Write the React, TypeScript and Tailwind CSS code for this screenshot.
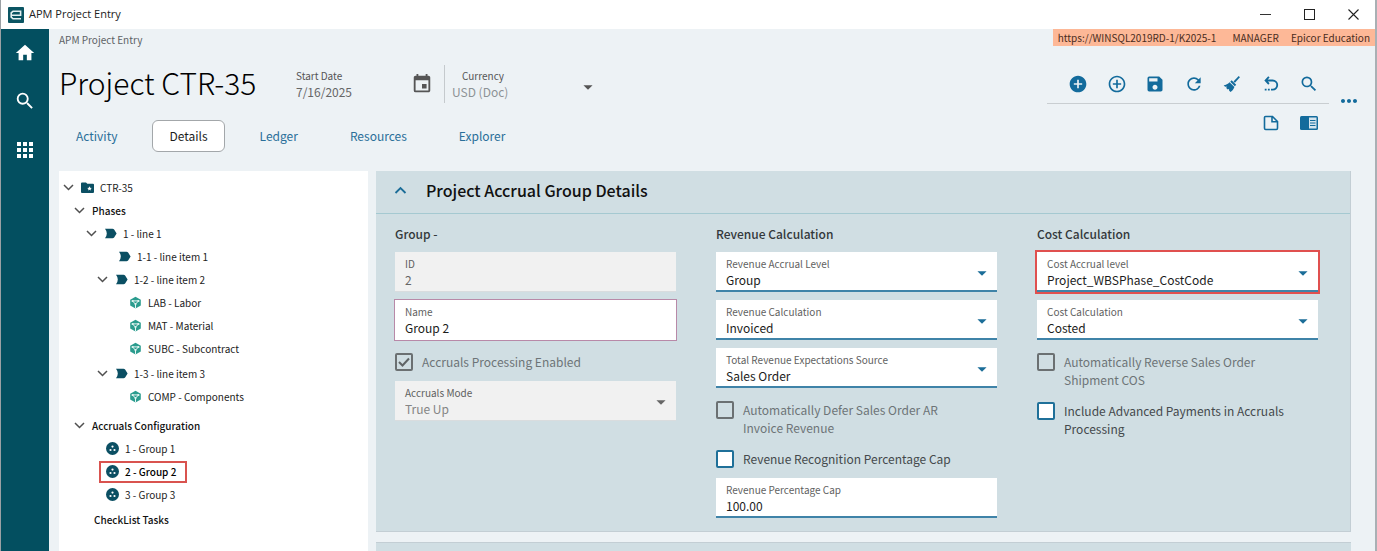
import React, { useState } from "react";
import {
  MdAddCircle,
  MdAddCircleOutline,
  MdApps,
  MdArrowDropDown,
  MdEvent,
  MdHome,
  MdMoreHoriz,
  MdRefresh,
  MdSave,
  MdSearch,
} from "react-icons/md";

type TreeIcon = "folder" | "phase" | "cost" | "group";

interface TreeNode {
  label: string;
  indent: string;
  icon?: TreeIcon;
  expandable?: boolean;
  bold?: boolean;
  selected?: boolean;
}

const projectNodes: TreeNode[] = [
  { label: "CTR-35", indent: "pl-[3px]", icon: "folder", expandable: true },
  { label: "Phases", indent: "pl-[14px]", expandable: true, bold: true },
  { label: "1 - line 1", indent: "pl-[26px]", icon: "phase", expandable: true },
  { label: "1-1 - line item 1", indent: "pl-[59px]", icon: "phase" },
  { label: "1-2 - line item 2", indent: "pl-[37px]", icon: "phase", expandable: true },
  { label: "LAB - Labor", indent: "pl-[70px]", icon: "cost" },
  { label: "MAT - Material", indent: "pl-[70px]", icon: "cost" },
  { label: "SUBC - Subcontract", indent: "pl-[70px]", icon: "cost" },
];

const lastPhaseNodes: TreeNode[] = [
  { label: "1-3 - line item 3", indent: "pl-[37px]", icon: "phase", expandable: true },
  { label: "COMP - Components", indent: "pl-[70px]", icon: "cost" },
];

const accrualNodes: TreeNode[] = [
  { label: "Accruals Configuration", indent: "pl-[14px]", expandable: true, bold: true },
  { label: "1 - Group 1", indent: "pl-[47px]", icon: "group" },
  { label: "2 - Group 2", indent: "pl-[47px]", icon: "group", selected: true },
  { label: "3 - Group 3", indent: "pl-[47px]", icon: "group" },
];

const tabs = ["Activity", "Details", "Ledger", "Resources", "Explorer"];

const AppLogo = () => (
  <svg viewBox="0 0 16 16" className="size-4" aria-hidden="true">
    <rect width="16" height="16" rx="1" fill="#0b5563" />
    <path
      d="M4 8.300h8.600V4.300H5L3.200 5.800v4.400L5 11.800h8"
      fill="none"
      stroke="#e4f0f2"
      strokeWidth="1.600"
    />
  </svg>
);

const BroomIcon = () => (
  <svg viewBox="0 0 24 24" className="size-5" aria-hidden="true">
    <path d="M20 2.500 21.500 4l-6 6.600-1.700-1.700z" fill="currentColor" />
    <path
      d="M11.600 7.600 17 13l-1.600 1.600L9.900 9.200zM9 9.800l5.900 5.700c-1 2.600-2.600 4.600-4.600 6L8.600 20l-.2-2-1.600.5-1.700-1.600.6-1.900-2 .2L2 13.500c2.700-.4 5.100-1.500 7-3.700z"
      fill="currentColor"
    />
  </svg>
);

const UndoIcon = () => (
  <svg viewBox="0 0 24 24" className="size-5" aria-hidden="true">
    <path
      d="M9.500 3.500 5.500 7.800l4 4.200M5.500 7.800h8.500a5.500 5.500 0 0 1 0 11H12"
      fill="none"
      stroke="currentColor"
      strokeWidth="2.200"
    />
    <path d="M4.500 17.700h2.200v2.200H4.500zM8.300 17.700h2.200v2.200H8.300z" fill="currentColor" />
  </svg>
);

const NoteIcon = () => (
  <svg viewBox="0 0 20 20" className="size-5" aria-hidden="true">
    <path
      d="M4.500 3.500h7l5 5v6.800a1.200 1.200 0 0 1-1.200 1.200H4.700a1.200 1.200 0 0 1-1.200-1.200V4.500a1 1 0 0 1 1-1zM11 3.500v5.300h5.500"
      fill="none"
      stroke="currentColor"
      strokeWidth="1.600"
    />
  </svg>
);

const PanelIcon = () => (
  <svg viewBox="0 0 20 20" className="size-5" aria-hidden="true">
    <rect x="1" y="3" width="18" height="14" rx="1.500" fill="currentColor" />
    <rect x="10" y="4.500" width="7.500" height="11" fill="#d5e5ee" />
    <path d="M11 7.500h5.500M11 10h5.500M11 12.500h5.500" stroke="currentColor" strokeWidth="1" />
  </svg>
);

const NodeIcon: React.FC<{ type: TreeIcon }> = ({ type }) => {
  if (type === "folder") {
    return (
      <svg viewBox="0 0 13 13" className="size-[13px] shrink-0" aria-hidden="true">
        <path
          d="M0 2.500a1 1 0 0 1 1-1h4l1.300 1.300H12a1 1 0 0 1 1 1V11a1 1 0 0 1-1 1H1a1 1 0 0 1-1-1z"
          fill="#0b4f63"
        />
        <path
          d="m8.500 5.200.7 1.500 1.600.2-1.200 1.100.3 1.600-1.400-.8-1.400.8.3-1.600L6.200 6.900l1.600-.2z"
          fill="#fff"
        />
      </svg>
    );
  }
  if (type === "phase") {
    return (
      <svg viewBox="0 0 13 13" className="size-[13px] shrink-0" aria-hidden="true">
        <path
          d="M1 1.800h7.500q1 0 1.600.8L12.600 6.500l-2.500 3.900q-.6.8-1.600.8H1q1.800-2.300 1.800-4.700T1 1.800z"
          fill="#0b4f63"
        />
      </svg>
    );
  }
  if (type === "cost") {
    return (
      <svg viewBox="0 0 13 13" className="size-[13px] shrink-0" aria-hidden="true">
        <path d="M6.500.8 11.800 3.700v5.800l-5.300 3-5.300-3V3.700z" fill="#2b9c8e" />
        <path
          d="M6.500 8v4.500M6.500 8 3.600 5.200M6.500 8l2.900-2.800M3.600 4.900h5.800"
          fill="none"
          stroke="#e6f6f3"
          strokeWidth="1"
        />
        <circle cx="3.600" cy="5" r="1.100" fill="#e6f6f3" />
        <circle cx="9.400" cy="5" r="1.100" fill="#e6f6f3" />
        <circle cx="6.500" cy="8" r="1.100" fill="#e6f6f3" />
      </svg>
    );
  }
  return (
    <svg viewBox="0 0 13 13" className="size-[13px] shrink-0" aria-hidden="true">
      <circle cx="6.500" cy="6.500" r="6.500" fill="#0b4f63" />
      <circle cx="6.500" cy="4.600" r="1.100" fill="#fff" />
      <circle cx="4.500" cy="8" r="1.100" fill="#fff" />
      <circle cx="8.500" cy="8" r="1.100" fill="#fff" />
    </svg>
  );
};

const TreeRow: React.FC<{ node: TreeNode }> = ({ node }) => (
  <li className={`flex h-[23px] items-center ${node.indent}`}>
    <button
      className={`flex items-center gap-1.5 whitespace-nowrap ${
        node.selected
          ? "-ml-[7px] h-[22px] border-2 border-[#d9534f] pl-[5px] pr-[9px] font-medium text-black"
          : node.bold
          ? "font-medium text-[#111]"
          : "text-[#222]"
      }`}
    >
      {node.expandable && (
        <svg viewBox="0 0 13 13" className="size-[13px] shrink-0" aria-hidden="true">
          <path d="m2 4 4.500 4.500L11 4" fill="none" stroke="#505050" strokeWidth="1.500" />
        </svg>
      )}
      {node.icon && <NodeIcon type={node.icon} />}
      {node.label}
    </button>
  </li>
);

interface FieldProps {
  id: string;
  label: string;
  value: string;
  disabled?: boolean;
  highlight?: string;
}

const TextField: React.FC<FieldProps> = ({ id, label, value, disabled, highlight }) => {
  const [text, setText] = useState(value);

  return (
    <div
      className={`h-10 px-[10px] pt-1 ${
        disabled
          ? "border-b border-[#d9dcde] bg-[#f1f1f1]"
          : highlight ?? "border-b-2 border-[#3f83a8] bg-white"
      }`}
    >
      <label htmlFor={id} className="block text-[10px] leading-4 text-[#5f5f5f]">
        {label}
      </label>
      <input
        id={id}
        value={text}
        disabled={disabled}
        onChange={(e) => setText(e.target.value)}
        className={`block h-4 w-full bg-transparent text-xs leading-4 outline-none ${
          disabled ? "text-[#666]" : "text-[#1c1c1c]"
        }`}
      />
    </div>
  );
};

const SelectField: React.FC<FieldProps> = ({ id, label, value, disabled, highlight }) => (
  <div
    className={`relative h-10 px-[10px] pt-1 ${
      disabled ? "border-b border-[#d9dcde] bg-[#f1f1f1]" : "border-b-2 border-[#3f83a8] bg-white"
    } ${highlight ?? ""}`}
  >
    <label htmlFor={id} className="block text-[10px] leading-4 text-[#5f5f5f]">
      {label}
    </label>
    <select
      id={id}
      defaultValue={value}
      disabled={disabled}
      className={`block h-4 w-full appearance-none bg-transparent text-xs leading-4 opacity-100 outline-none ${
        disabled ? "text-[#858585]" : "text-[#1c1c1c]"
      }`}
    >
      <option>{value}</option>
    </select>
    <MdArrowDropDown
      className={`pointer-events-none absolute right-1 top-[10px] size-[22px] ${
        disabled ? "text-[#666]" : "text-[#1b6d98]"
      }`}
    />
  </div>
);

interface CheckFieldProps {
  label: string;
  checked?: boolean;
  disabled?: boolean;
}

const CheckField: React.FC<CheckFieldProps> = ({ label, checked, disabled }) => (
  <label
    className={`flex min-h-[25px] gap-[9px] pt-[5px] text-xs leading-[18px] ${
      disabled ? "text-[#6d7477]" : "text-[#44494c]"
    }`}
  >
    <span className="relative size-[18px] shrink-0">
      <input
        type="checkbox"
        defaultChecked={checked}
        disabled={disabled}
        className={`peer block size-[18px] appearance-none rounded-xs border-2 ${
          disabled ? "border-[#6b7072]" : "border-[#1f7099] bg-white"
        }`}
      />
      <svg
        viewBox="0 0 18 18"
        className="pointer-events-none absolute inset-0 hidden peer-checked:block"
        aria-hidden="true"
      >
        <path d="m4 9 3.500 3.500L14 5.500" fill="none" stroke="#5f6466" strokeWidth="2" />
      </svg>
    </span>
    <span className="max-w-[235px]">{label}</span>
  </label>
);

const App: React.FC = () => {
  const [activeTab, setActiveTab] = useState("Details");
  const [startDate, setStartDate] = useState("7/16/2025");

  return (
    <div className="flex h-screen flex-col overflow-hidden border-l border-r-2 border-l-[#9aa0a4] border-r-[#a9b0b4] bg-[#edf2f5] font-['Noto_Sans_CJK_SC',sans-serif]">
      <div className="flex h-[29px] shrink-0 items-center justify-between bg-white pl-[7px] pr-4">
        <div className="flex items-center gap-[5px] font-['Open_Sans',sans-serif] text-[11px] text-[#222]">
          <AppLogo />
          APM Project Entry
        </div>
        <div className="flex items-center gap-[33px] text-[#222]">
          <button aria-label="Minimize" className="flex h-3 w-[11px] items-center">
            <span className="h-px w-full bg-[#333]" />
          </button>
          <button aria-label="Maximize" className="size-[11px] border border-[#222]" />
          <button aria-label="Close">
            <svg viewBox="0 0 11 11" className="size-[11px]">
              <path d="m.5.5 10 10m0-10-10 10" stroke="currentColor" strokeWidth="1.100" />
            </svg>
          </button>
        </div>
      </div>

      <div className="flex min-h-0 flex-1">
        <nav className="flex w-12 shrink-0 flex-col items-center gap-[26px] bg-[#034f60] pt-[13px] text-white">
          <button aria-label="Home">
            <MdHome className="size-[22px]" />
          </button>
          <button aria-label="Search">
            <MdSearch className="size-[22px]" />
          </button>
          <button aria-label="Apps">
            <MdApps className="size-6" />
          </button>
        </nav>

        <div className="flex min-w-0 flex-1 flex-col">
          <header className="flex items-start justify-between pl-[10px]">
            <div>
              <p className="h-[22px] text-[10px] leading-[22px] text-[#5d6265]">
                APM Project Entry
              </p>
              <div className="flex h-[62px] items-center">
                <h1 className="w-[237px] whitespace-nowrap text-3xl font-light leading-8 text-black">
                  Project CTR-35
                </h1>
                <div className="mt-1 w-[115px]">
                  <label htmlFor="start-date" className="block text-[10px] leading-4 text-[#555]">
                    Start Date
                  </label>
                  <input
                    id="start-date"
                    value={startDate}
                    onChange={(e) => setStartDate(e.target.value)}
                    className="block h-4 w-full bg-transparent text-xs leading-4 text-[#666] outline-none"
                  />
                </div>
                <button aria-label="Pick date" className="mt-1 text-[#555]">
                  <MdEvent className="size-[22px]" />
                </button>
                <div className="relative ml-[11px] mt-1 h-[38px] w-[160px] border-l border-[#c5cacd] pl-[7px] pt-[3px]">
                  <label
                    htmlFor="currency"
                    className="block pl-2.5 text-[10px] leading-4 text-[#555]"
                  >
                    Currency
                  </label>
                  <select
                    id="currency"
                    defaultValue="USD (Doc)"
                    disabled
                    className="block h-4 w-full appearance-none bg-transparent text-xs leading-4 text-[#8d9295] opacity-100"
                  >
                    <option>USD (Doc)</option>
                  </select>
                  <MdArrowDropDown className="pointer-events-none absolute right-[5px] top-[11px] size-[22px] text-[#555]" />
                </div>
              </div>
              <div className="mt-[7px] flex gap-[18px]">
                {tabs.map((tab) => (
                  <button
                    key={tab}
                    onClick={() => setActiveTab(tab)}
                    className={`h-8 rounded-md border px-4 text-xs ${
                      tab === activeTab
                        ? "border-[#a3a7aa] bg-white text-[#1c1c1c]"
                        : "border-transparent text-[#2a6f99]"
                    }`}
                  >
                    {tab}
                  </button>
                ))}
              </div>
            </div>

            <div className="flex flex-col items-end">
              <div className="flex h-[17px] items-center whitespace-nowrap bg-[#fdb897] px-[5px] text-[10px] leading-4 text-[#4a2c20]">
                <span>https://WINSQL2019RD-1/K2025-1</span>
                <span className="ml-4">MANAGER</span>
                <span className="ml-3">Epicor Education</span>
              </div>
              <div className="mt-7 flex items-start gap-2 pr-[14px] text-[#136b9c]">
                <div className="w-[282px]">
                  <div className="flex justify-between border-b border-[#c9ced1] pb-[9px] pl-[21px] pr-[10px]">
                    <button aria-label="New">
                      <MdAddCircle className="size-5" />
                    </button>
                    <button aria-label="Add">
                      <MdAddCircleOutline className="size-5" />
                    </button>
                    <button aria-label="Save">
                      <MdSave className="size-5" />
                    </button>
                    <button aria-label="Refresh">
                      <MdRefresh className="size-5" />
                    </button>
                    <button aria-label="Clear">
                      <BroomIcon />
                    </button>
                    <button aria-label="Undo">
                      <UndoIcon />
                    </button>
                    <button aria-label="Find">
                      <MdSearch className="size-5" />
                    </button>
                  </div>
                  <div className="flex justify-end gap-[18px] pr-[10px] pt-[9px]">
                    <button aria-label="Notes">
                      <NoteIcon />
                    </button>
                    <button aria-label="Side panel">
                      <PanelIcon />
                    </button>
                  </div>
                </div>
                <button aria-label="More actions" className="mt-[15px]">
                  <MdMoreHoriz className="size-6" />
                </button>
              </div>
            </div>
          </header>

          <div className="mt-[19px] flex min-h-0 flex-1 gap-2 pl-[10px] pr-6">
            <aside className="w-[309px] shrink-0 bg-white pt-[5px] text-[10px]">
              <ul>
                {projectNodes.map((node) => (
                  <TreeRow key={node.label} node={node} />
                ))}
              </ul>
              <ul className="pt-0.5">
                {lastPhaseNodes.map((node) => (
                  <TreeRow key={node.label} node={node} />
                ))}
              </ul>
              <ul className="pt-1.5">
                {accrualNodes.map((node) => (
                  <TreeRow key={node.label} node={node} />
                ))}
              </ul>
              <ul className="pt-0.5">
                <TreeRow node={{ label: "CheckList Tasks", indent: "pl-[35px]", bold: true }} />
              </ul>
            </aside>

            <main className="min-w-0 flex-1">
              <section className="border-b border-r border-[#c3ced4] bg-[#d0dee3] pb-[13px]">
                <div className="flex h-[43px] items-center gap-[19px] border-b border-[#a5c9d1] pb-1 pl-[18px]">
                  <button aria-label="Collapse" className="text-[#1b6d98]">
                    <svg viewBox="0 0 13 13" className="size-[13px]" aria-hidden="true">
                      <path
                        d="m1.500 9 5-5 5 5"
                        fill="none"
                        stroke="currentColor"
                        strokeWidth="1.800"
                      />
                    </svg>
                  </button>
                  <h2 className="text-base font-medium text-[#111]">
                    Project Accrual Group Details
                  </h2>
                </div>
                <div className="grid grid-cols-3 gap-10 pl-[19px] pr-8 pt-2.5">
                  <div className="flex flex-col gap-2">
                    <h3 className="text-xs font-medium leading-5 text-[#33383b]">Group -</h3>
                    <TextField id="group-id" label="ID" value="2" disabled />
                    <TextField
                      id="group-name"
                      label="Name"
                      value="Group 2"
                      highlight="bg-white outline outline-[#b889a8]"
                    />
                    <CheckField label="Accruals Processing Enabled" checked disabled />
                    <SelectField id="accruals-mode" label="Accruals Mode" value="True Up" disabled />
                  </div>

                  <div className="flex flex-col gap-2">
                    <h3 className="text-xs font-medium leading-5 text-[#33383b]">
                      Revenue Calculation
                    </h3>
                    <SelectField id="revenue-level" label="Revenue Accrual Level" value="Group" />
                    <SelectField id="revenue-calc" label="Revenue Calculation" value="Invoiced" />
                    <SelectField
                      id="revenue-source"
                      label="Total Revenue Expectations Source"
                      value="Sales Order"
                    />
                    <CheckField label="Automatically Defer Sales Order AR Invoice Revenue" disabled />
                    <CheckField label="Revenue Recognition Percentage Cap" />
                    <TextField id="revenue-cap" label="Revenue Percentage Cap" value="100.00" />
                  </div>

                  <div className="flex flex-col gap-2">
                    <h3 className="text-xs font-medium leading-5 text-[#33383b]">
                      Cost Calculation
                    </h3>
                    <SelectField
                      id="cost-level"
                      label="Cost Accrual level"
                      value="Project_WBSPhase_CostCode"
                      highlight="outline-2 outline-[#e0504f]"
                    />
                    <SelectField id="cost-calc" label="Cost Calculation" value="Costed" />
                    <CheckField label="Automatically Reverse Sales Order Shipment COS" disabled />
                    <CheckField label="Include Advanced Payments in Accruals Processing" />
                  </div>
                </div>
              </section>
              <section className="mt-[10px] h-12 border-t border-[#c3ced4] bg-[#d0dee3]" />
            </main>
          </div>
        </div>
      </div>
    </div>
  );
};

export default App;
